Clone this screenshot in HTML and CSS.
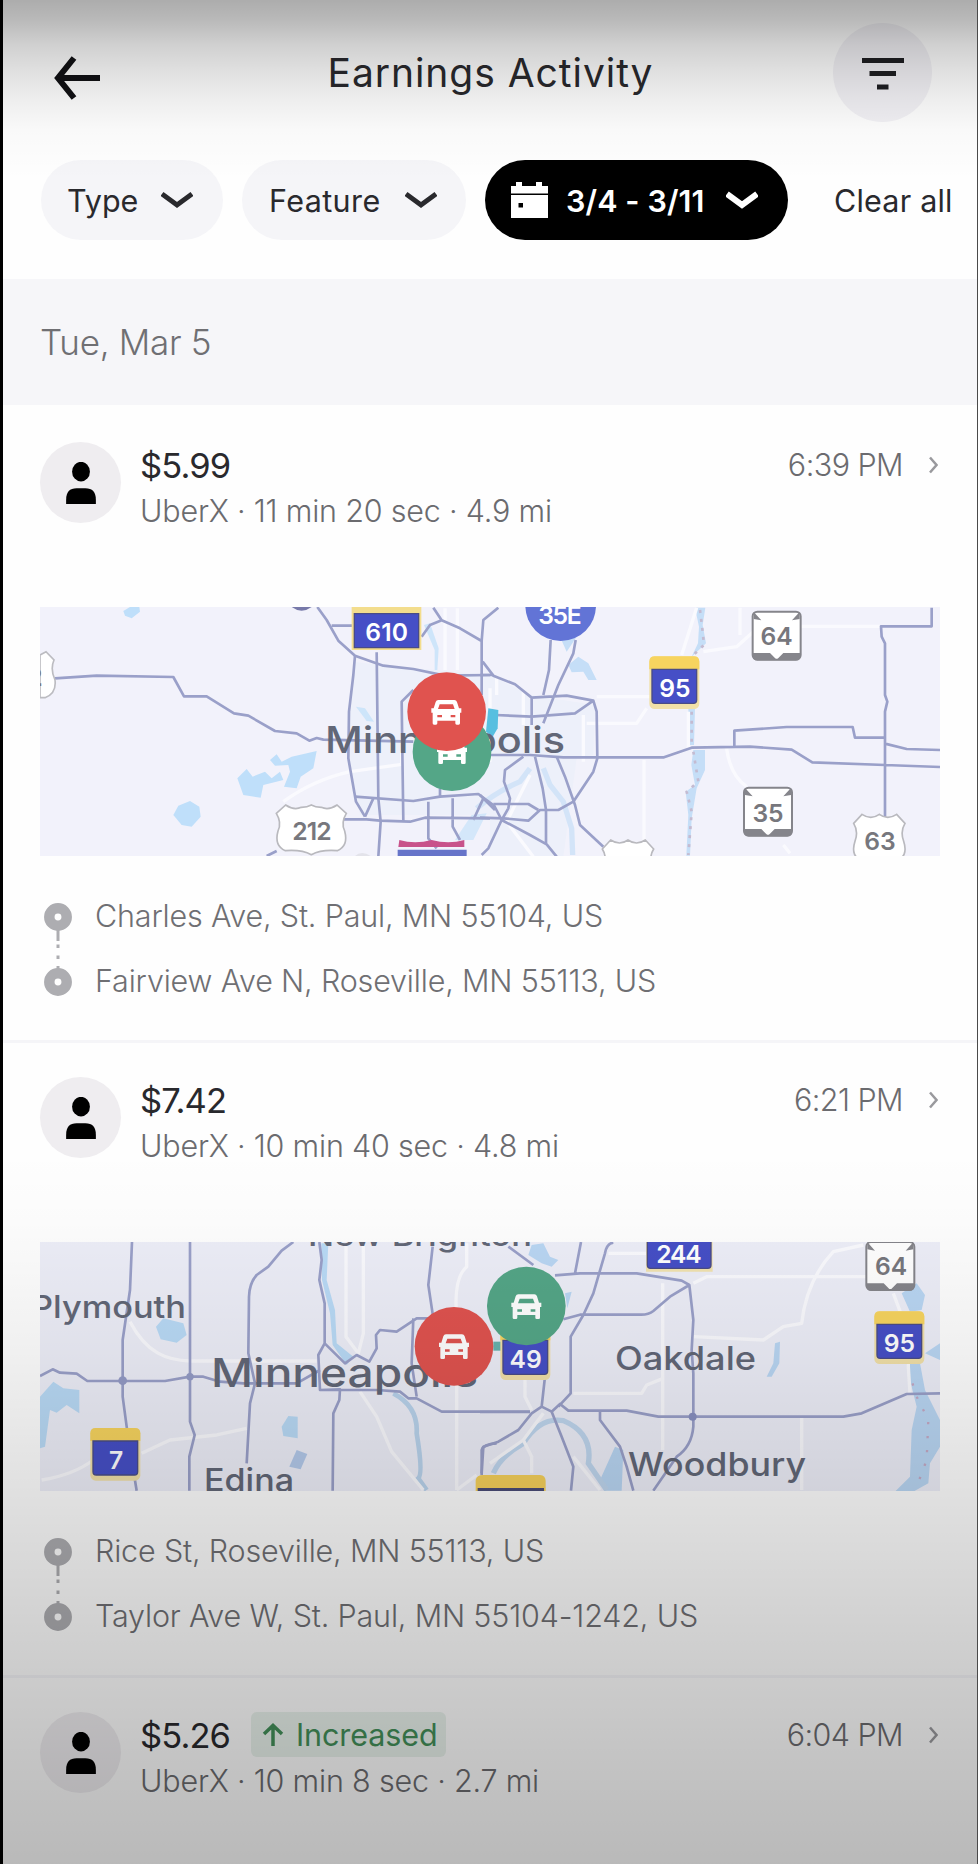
FILE: index.html
```html
<!DOCTYPE html>
<html lang="en">
<head>
<meta charset="utf-8">
<title>Earnings Activity</title>
<link rel="stylesheet" href="styles.css">
</head>
<body>
<svg class="defs" width="0" height="0" aria-hidden="true">
  <defs>
    <path id="car" fill-rule="evenodd" d="M-24-37H24Q30-37 32-31L38-12H45V1H41V33Q41 37 37 37H31Q27 37 27 33V25H-27V33Q-27 37-31 37H-37Q-41 37-41 33V1H-45V-12H-38L-32-31Q-30-37-24-37ZM-20-24L-25-10H25L20-24ZM-27 8V15H-13V8ZM13 8V15H27V8Z"/>
    <g id="county">
      <rect x="-75" y="-79" width="150" height="158" rx="16" fill="#f1e0a8"/>
      <path d="M-75-40V-63Q-75-79-59-79H59Q75-79 75-63V-40Z" fill="#f7d45f"/>
      <path d="M-67-40H67V52Q67 62 57 62H-57Q-67 62-67 52Z" fill="#464fc6" stroke="#4a4c86" stroke-width="4"/>
    </g>
    <g id="state">
      <rect x="-72" y="-72" width="144" height="144" rx="14" fill="#fff" stroke="#85858b" stroke-width="6"/>
      <path d="M-69-50V-68H-66L-46-46ZM69-50V-68H66L46-46ZM-72 52H-20L0 72L20 52H72V60Q72 74 58 74H-58Q-72 74-72 60Z" fill="#85858b"/>
    </g>
    <path id="shield" d="M-52-73Q-25-55 0-73Q25-55 52-73L77-46Q62-22 73 8Q88 54 50 66Q20 66 0 78Q-20 66-50 66Q-88 54-73 8Q-62-22-77-46Z" fill="#fff" stroke="#b9b9be" stroke-width="5"/>
    <path id="shield-wide" d="M-77-73Q-52-56-30-66Q-12-66 0-73Q12-66 30-66Q52-56 77-73L105-48Q88-20 100 5Q112 50 78 64Q30 60 0 76Q-30 60-78 64Q-112 50-100 5Q-88-20-105-48Z" fill="#fff" stroke="#b9b9be" stroke-width="5"/>
    <g id="person"><ellipse cx="13" cy="11" rx="10.2" ry="11.2" transform="translate(4 0)"/><path d="M0 48V43Q0 30 12 30H22Q34 30 34 43V48Z"/></g>
  </defs>
</svg>

<main class="screen">
  <header class="header">
    <svg class="back" viewBox="0 0 48 44"><path d="M21 2L5 22L21 42M4 22H47"/></svg>
    <h1 class="title">Earnings Activity</h1>
    <span class="filter"><svg viewBox="0 0 44 34"><path d="M1 3.5H43M8.500 16.500H35M16 30H27.500"/></svg></span>
  </header>

  <nav class="chips">
    <span class="chip chip-type"><span class="chip-label t-type">Type</span><svg class="chev" viewBox="0 0 32 18"><path d="M1 3L16 14L31 3"/></svg></span>
    <span class="chip chip-feature"><span class="chip-label t-feature">Feature</span><svg class="chev" viewBox="0 0 32 18"><path d="M1 3L16 14L31 3"/></svg></span>
    <span class="chip chip-date">
      <svg class="cal" viewBox="0 0 37 37"><path fill-rule="evenodd" d="M0 13H37V36H0ZM7.500 21V25.500H12V21Z"/><path d="M0 4H5V0H11V4H25V0H31V4H37V11.500H0Z"/></svg>
      <span class="t-date">3/4 - 3/11</span>
      <svg class="chev" viewBox="0 0 32 18"><path d="M1 3L16 14L31 3"/></svg>
    </span>
    <span class="clear">Clear all</span>
  </nav>

  <h2 class="day">Tue, Mar 5</h2>

  <article class="ride">
    <div class="ride-head">
      <span class="avatar"><svg viewBox="0 0 34 48"><use href="#person"/></svg></span>
      <div class="ride-text">
        <div class="fare-row"><span class="fare">$5.99</span></div>
        <div class="detail">UberX · 11 min 20 sec · 4.9 mi</div>
      </div>
      <span class="time">6:39 PM</span>
      <svg class="go" viewBox="0 0 9 18"><path d="M1 1.500L7.500 9L1 16.500"/></svg>
    </div>
    <svg class="map" viewBox="0 0 900 249">
      <rect width="900" height="249" fill="#f2f2fb"/>
      <g transform="translate(-10 -12) scale(.33333)">
        <path d="M955 480L990 660H1380V785H1600L1640 490L1690 480L1695 330L1500 300L1380 240L1050 210L970 200Z" fill="#edf0fa"/>
        <g fill="#bfdffa">
          <path d="M280 48L300 36H328L330 50L305 70L285 62Z"/>
          <path d="M430 660L445 632L480 618L508 635L512 665L485 695L455 690Z"/>
          <path d="M622 550L650 522L668 545L705 530L725 550L750 530L760 555L700 570L692 608L640 600Z"/>
          <path d="M720 495L740 478L755 500L785 485L860 468L850 520L812 545L800 580L762 575L780 530L775 510L735 512Z"/>
          <path d="M978 335L1005 340L1032 380L1010 378Z" opacity=".7"/>
          <path d="M1182 90L1200 85L1226 160L1222 225H1214V165Z" opacity=".7"/>
          <path d="M1325 660L1370 655L1330 735H1275Z" opacity=".6"/>
        </g>
        <path d="M1340 640Q1400 590 1470 560L1500 520M1540 520L1560 570L1600 620L1625 700L1628 780" fill="none" stroke="#d3e4f8" stroke-width="16"/>
        <g class="road-minor">
          <path d="M760 620Q850 555 960 530L1115 508V470M1282 40V225M1245 40V225M1380 280V500M1500 540L1430 680L1510 785"/>
        </g>
        <g class="road">
          <path d="M75 250L200 242L430 246L462 304H530L612 355L655 362L735 408L800 415L838 437L860 429L880 434L1150 440"/>
          <path d="M862 36L890 75L925 137L975 182L1060 212L1150 222L1245 242L1380 240"/>
          <path d="M905 92H970M1175 125L1200 90L1235 76L1210 38M1235 76L1290 100L1355 138L1360 75L1405 38M1355 138V300"/>
          <path d="M975 182L970 240L957 350L955 490L978 620L1005 665M1040 172L1045 610L1052 680L1045 785M1120 680L1115 320L1150 285"/>
          <path d="M975 605L1150 618L1230 605L1345 597L1390 630M940 673H1010L1050 677L1140 680L1185 668L1380 670M1005 665L1030 610M1195 620V730L1220 760M1268 610V695L1290 735M1230 605V580M1360 610L1330 675M710 783L740 768"/>
        </g>
      </g>
      <g transform="translate(440 -12) scale(.33333)">
        <g fill="#c5def7">
          <path d="M265 210L295 185L325 205L350 255H325L310 230L275 232Z"/><path d="M240 125H290L260 170Z"/>
          <path d="M645 38H676L668 90L678 145L635 185L654 145L657 95ZM625 340H645L642 450H630ZM640 465H675V525L650 580L635 670L630 782H619L625 660L617 590L645 570L634 510Z"/>
        </g>
        <path d="M660 45L668 110L672 150L640 180M635 350V445M640 470L655 560L620 590L635 650L625 780" fill="none" stroke="#c4bbd1" stroke-width="8" stroke-dasharray="9 18"/>
        <path class="road-minor" d="M650 38L605 180M780 38V120M670 170L770 155L820 110M960 94H1200M350 305H510M310 500V360M320 385H470L500 340M492 495V760M740 460Q750 540 800 575M625 350V460M910 750L930 775M50 250V300M130 290V390"/>
        <g class="road">
          <path d="M212 135L207 225L190 300M287 135L280 175L235 270L190 385M8 200L40 242L105 268L155 308L260 302L340 317L350 350L352 490L340 530L280 620L235 645H180L145 677L70 670L0 668M340 317L285 355L155 365L45 360M155 308V390"/>
          <path d="M0 240H40M10 480H150L250 487H552L635 458L810 455L935 464L997 502L1215 510L1380 516M763 458V407L920 396H1118L1125 428H1215M1215 446L1280 462L1380 465M1355 38V94H1203L1205 125L1215 145V300L1222 320L1215 350V665"/>
          <path d="M130 485L75 525L72 560L90 610L85 640L65 675L25 760L5 780M165 485L188 580L198 645V745M230 485L255 545L285 630L300 690L370 755M40 627H145L175 645M40 627L65 675L150 720L200 748L230 785M0 600L45 645"/>
        </g>
        <path d="M25 340L55 345L53 400L38 425L18 410Z" fill="#57bfe0"/>
      </g>
      <text class="city" x="285" y="145.500" font-size="37" textLength="240" lengthAdjust="spacingAndGlyphs">Minneapolis</text>
      <g transform="translate(-10 -12) scale(.33333)">
        <path d="M965 20H1174V165H965Z" fill="#f3dd8d"/><path d="M973 56H1166V158H973Z" fill="#464fc6" stroke="#4a4c86" stroke-width="4"/>
        <text class="sign" x="1070" y="137" textLength="128">610</text>
        <use href="#shield-wide" x="844" y="703"/><text class="sign dark" x="846" y="736" textLength="118">212</text>
        <path d="M30 180L48 170L72 195Q60 222 75 255Q80 295 45 308H30Z" fill="#fff" stroke="#bcbcc1" stroke-width="5"/>
        <text class="sign dark" x="15" y="273">2</text>
        <path d="M785 36H845Q815 58 785 36Z" fill="#7779a9"/>
        <path d="M975 783Q995 765 1022 783Z" fill="#e3e3ea"/>
        <path d="M1108 735Q1155 748 1205 735Q1255 748 1303 735V756H1105Z" fill="#c8528a"/><path d="M1103 764H1310V786H1103Z" fill="#6674c9"/>
        <circle cx="1592" cy="32" r="106" fill="#6274d6"/><text class="sign" x="1590" y="87" textLength="130">35E</text>
        <use href="#county" x="1933" y="263"/><text class="sign" x="1935" y="307">95</text>
        <use href="#state" x="2240" y="122"/><text class="sign dark" x="2240" y="151">64</text>
        <use href="#state" x="2214" y="650"/><text class="sign dark" x="2214" y="681">35</text>
        <use href="#shield" x="2548" y="731"/><text class="sign dark" x="2550" y="766">63</text>
        <use href="#shield" x="1794" y="808"/>
        <circle cx="1266" cy="470" r="118" fill="#54a687"/><use href="#car" x="1266" y="470" fill="#fff"/>
        <circle cx="1250" cy="350" r="118" fill="#e0534f"/><use href="#car" x="1249" y="352" fill="#fff"/>
      </g>
    </svg>
    <div class="route">
      <svg class="route-line" viewBox="0 0 28 129"><path d="M14 45V57M14 60.500V64M14 71.500V75M14 82V88"/><circle cx="14" cy="33" r="8.700"/><circle cx="14" cy="98" r="8.700"/></svg>
      <div class="stops"><div>Charles Ave, St. Paul, MN 55104, US</div><div>Fairview Ave N, Roseville, MN 55113, US</div></div>
    </div>
  </article>

  <article class="ride">
    <div class="ride-head">
      <span class="avatar"><svg viewBox="0 0 34 48"><use href="#person"/></svg></span>
      <div class="ride-text">
        <div class="fare-row"><span class="fare">$7.42</span></div>
        <div class="detail">UberX · 10 min 40 sec · 4.8 mi</div>
      </div>
      <span class="time">6:21 PM</span>
      <svg class="go" viewBox="0 0 9 18"><path d="M1 1.500L7.500 9L1 16.500"/></svg>
    </div>
    <svg class="map" viewBox="0 0 900 249">
      <rect width="900" height="249" fill="#edeef8"/>
      <g transform="translate(-10 -12) scale(.33333)">
        <g fill="#b9daf6">
          <path d="M30 500L70 455L100 475L148 480V550L110 525L80 548L60 540L45 650L30 655Z"/>
          <path d="M378 290L400 265L460 280L470 315L440 338L392 328Z"/>
          <path d="M755 590L775 558L803 560V625L760 618Z"/><path d="M778 710L800 660L832 672L812 718Z" fill="#b3c9ea"/>
          <path d="M874 40H895L890 150L915 240L920 340L970 380L950 405L908 345L900 250L876 150Z"/>
        </g>
        <path d="M1090 490Q1165 530 1160 610Q1180 730 1165 745L1190 780" fill="none" stroke="#b9d3ec" stroke-width="14"/>
        <path class="road-minor" d="M300 275C350 370 410 390 480 393H860M948 40V320L985 370L1000 310V40M1310 40V110Q1270 145 1280 260V780M35 750Q130 735 190 690M335 670L420 630L560 615L650 595M990 485L1040 560L1085 665L1180 780M1280 780L1340 735"/>
        <g class="road">
          <path d="M306 36L300 180L278 330V500L290 590L305 690L320 782M480 36V575L494 615L478 680V782"/>
          <path d="M30 438L68 418L90 428L140 431L172 453H405L480 440H520L570 455L640 460L800 460L870 420"/>
          <path d="M790 36L755 62L715 110L680 135Q658 160 657 200L655 370L675 460L660 520L650 700"/>
          <path d="M868 36L875 90L868 150L884 220V340L865 375L870 480L930 478L928 510L910 550L908 782M884 340L945 400L980 375L1018 395L1040 355L1038 315L1050 300L1100 305L1160 265H1210L1195 165L1208 50M1150 265L1145 400L1160 500M870 480L1040 480L1110 485L1135 505H1160L1235 545H1500M1355 735V660Q1360 642 1400 640"/>
        </g>
        <circle cx="278" cy="452" r="13" fill="#949bc6"/><circle cx="480" cy="440" r="11" fill="#949bc6"/>
      </g>
      <g transform="translate(440 -12) scale(.33333)">
        <g fill="#b9d6f3">
          <path d="M155 45L190 40L210 80L235 90L215 110L185 100L145 75Z"/>
          <path d="M1265 190L1310 160L1335 195L1325 240L1290 245ZM1280 400H1320L1335 480L1380 570V650L1350 700L1345 760L1300 785H1245L1290 740L1295 600L1310 530L1290 450Z"/>
          <path d="M885 340L900 335L898 400L875 440H860L880 400Z"/><path d="M360 750L405 650L430 660L425 782H375Z"/><path d="M1335 370L1380 340V390Z"/>
          <path d="M70 120L150 100M255 190L275 185L262 235Z"/>
        </g>
        <path d="M40 730Q60 680 130 640Q180 560 250 572Q340 610 325 700L380 780" fill="none" stroke="#bfd6ee" stroke-width="16"/>
        <path d="M1285 420L1310 500L1345 570L1340 690L1310 770" fill="none" stroke="#c4a9c4" stroke-width="7" stroke-dasharray="7 35"/>
        <path class="road-minor" d="M385 70H500M548 160V660M640 160L680 140H1160M640 320L850 330L910 290L965 280Q980 150 1060 65L1150 45M280 490H485L500 465L550 445M135 450V500L155 540M965 560V780M1240 190L1285 310V410L1290 490M30 700L130 630L155 680V730M280 680L360 780M190 550L130 630"/>
        <g class="road">
          <path d="M85 50L160 105M303 36L285 130M225 136L300 130H470L605 152L628 165L640 270L635 360L640 430V590Q635 650 590 680L520 782M628 165L570 200L520 243Q505 255 480 254H300L250 268M400 38Q380 40 375 70L340 190L310 255L272 320V490L235 530"/>
          <path d="M195 440L185 530L155 550L115 600L55 635L10 650L5 730M185 530L215 545L240 522L265 542H440L535 560H1090L1145 550L1280 492L1380 490M0 546H150M215 545L245 620L280 710L273 782M360 540V570L420 650L440 710L460 782"/>
        </g>
        <circle cx="638" cy="560" r="12" fill="#8990c0"/><path d="M40 335H68V362H40Z" fill="#66b2ad"/>
      </g>
      <g class="city">
        <text x="-9" y="76" font-size="31" textLength="155" lengthAdjust="spacingAndGlyphs">Plymouth</text>
        <text x="171" y="145" font-size="40" textLength="267" lengthAdjust="spacingAndGlyphs">Minneapolis</text>
        <text x="164" y="248.500" font-size="31.500" textLength="90" lengthAdjust="spacingAndGlyphs">Edina</text>
        <text x="268" y="3.500" font-size="30" textLength="224" lengthAdjust="spacingAndGlyphs">New Brighton</text>
        <text x="575" y="128" font-size="32" textLength="141" lengthAdjust="spacingAndGlyphs">Oakdale</text>
        <text x="588" y="233.500" font-size="32" textLength="178" lengthAdjust="spacingAndGlyphs">Woodbury</text>
      </g>
      <g transform="translate(-10 -12) scale(.33333)">
        <use href="#county" x="256" y="673"/><text class="sign" x="258" y="717">7</text>
        <path d="M1337 785V750Q1340 735 1360 735H1530Q1548 737 1547 755V785Z" fill="#f5d05a"/><path d="M1343 774H1542V790H1343Z" fill="#4a4c76"/>
        <path d="M1848 20H2048V125H1848Z" fill="#f1e2b0"/><path d="M1852 20H2043V105Q2043 115 2033 115H1862Q1852 115 1852 105Z" fill="#464fc6" stroke="#4a4c86" stroke-width="4"/>
        <text class="sign" x="1947" y="98" textLength="136">244</text>
        <use href="#state" x="2581" y="108"/><text class="sign dark" x="2583" y="136">64</text>
        <use href="#county" x="2608" y="323"/><text class="sign" x="2608" y="366">95</text>
        <use href="#county" x="1486" y="371"/><text class="sign" x="1487" y="415">49</text>
        <circle cx="1489" cy="228" r="118" fill="#54a687"/><use href="#car" x="1489" y="230" fill="#fff"/>
        <circle cx="1272" cy="349" r="118" fill="#e0534f"/><use href="#car" x="1272" y="350" fill="#fff"/>
      </g>
    </svg>
    <div class="route">
      <svg class="route-line" viewBox="0 0 28 129"><path d="M14 45V57M14 60.500V64M14 71.500V75M14 82V88"/><circle cx="14" cy="33" r="8.700"/><circle cx="14" cy="98" r="8.700"/></svg>
      <div class="stops"><div>Rice St, Roseville, MN 55113, US</div><div>Taylor Ave W, St. Paul, MN 55104-1242, US</div></div>
    </div>
  </article>

  <article class="ride last">
    <div class="ride-head">
      <span class="avatar"><svg viewBox="0 0 34 48"><use href="#person"/></svg></span>
      <div class="ride-text">
        <div class="fare-row"><span class="fare">$5.26</span><span class="badge"><svg viewBox="0 0 24 24"><path d="M12 23V3M3 11L12 2.500L21 11"/></svg>Increased</span></div>
        <div class="detail">UberX · 10 min 8 sec · 2.7 mi</div>
      </div>
      <span class="time">6:04 PM</span>
      <svg class="go" viewBox="0 0 9 18"><path d="M1 1.500L7.500 9L1 16.500"/></svg>
    </div>
  </article>
</main>
</body>
</html>
```
FILE: styles.css
```css
* { box-sizing: border-box; }

body {
  margin: 0;
  font-family: Inter, "Liberation Sans", sans-serif;
  color: #29292d;
  white-space: nowrap;
}

svg { display: block; flex: none; }
.defs { position: absolute; }

.screen {
  position: relative;
  width: 978px;
  height: 1864px;
  overflow: hidden;
  background: #fefefe;
  border-left: 3px solid #000;
  border-right: 1px solid #4a4a4a;
}

/* Dark fades at the top and bottom of the screen */
.screen::after {
  content: "";
  position: absolute;
  inset: 0;
  pointer-events: none;
  background:
    linear-gradient(rgba(0,0,0,.32) 0, rgba(0,0,0,.27) 20px, rgba(0,0,0,.18) 45px, rgba(0,0,0,.12) 70px, rgba(0,0,0,.065) 98px, rgba(0,0,0,.02) 130px, transparent 180px),
    linear-gradient(transparent 1150px, rgba(0,0,0,.012) 1220px, rgba(0,0,0,.055) 1350px, rgba(0,0,0,.12) 1500px, rgba(0,0,0,.2) 1680px, rgba(0,0,0,.27) 1864px);
}

.header {
  display: grid;
  grid-template-columns: 100px 1fr 100px;
  align-items: center;
  height: 145px;
  padding: 0 44px 0 50px;
}
.back { width: 48px; height: 44px; margin-top: 10px; fill: none; stroke: #111114; stroke-width: 6; }
.title {
  margin: 0 0 0 -5px;
  font-size: 39px;
  font-weight: 400;
  letter-spacing: .95px;
  text-align: center;
}
.filter {
  display: flex;
  align-items: center;
  justify-content: center;
  width: 99px;
  height: 99px;
  border-radius: 50%;
  background: #f2f1f5;
}
.filter svg { width: 44px; height: 34px; margin-top: 3px; fill: none; stroke: #1e1e22; stroke-width: 5; }

.chips { display: flex; align-items: center; height: 134px; padding: 0 0 24px 38px; }
.chip {
  display: flex;
  align-items: center;
  height: 80px;
  margin-right: 19px;
  border-radius: 40px;
  background: #f5f5f8;
  font-size: 30.5px;
}
.chip-type { width: 182px; padding-left: 26px; }
.chip-feature { width: 224px; padding-left: 27px; margin-right: 19px; }
.chip-date { width: 303px; padding-left: 26px; background: #000; color: #fff; margin-right: 46px; }
.t-type { width: 94px; }
.t-feature { width: 136px; letter-spacing: .4px; }
.t-date { width: 160px; margin-left: 18px; font-weight: 600; letter-spacing: .1px; }
.chev { width: 32px; height: 18px; fill: none; stroke: #29292d; stroke-width: 5; }
.chip-date .chev { stroke: #fff; stroke-width: 6; }
.cal { width: 37px; height: 37px; fill: #fff; }
.clear { font-size: 30.5px; letter-spacing: .2px; }

.day {
  display: flex;
  align-items: center;
  height: 126px;
  margin: 0;
  padding-left: 37px;
  background: #f6f6f9;
  color: #6f6f73;
  font-size: 35px;
  font-weight: 300;
  letter-spacing: -.3px;
}

.ride { height: 638px; padding: 37px 37px 0; border-bottom: 3px solid #f5f5f8; }
.ride + .ride { height: 635px; padding-top: 34px; }
.ride.last { border: 0; }
.ride-head { display: flex; height: 165px; }
.avatar {
  display: flex;
  flex: none;
  justify-content: center;
  width: 81px;
  height: 81px;
  padding-top: 20px;
  border-radius: 50%;
  background: #efedf0;
  fill: #000;
}
.avatar svg { width: 34px; height: 42px; }
.ride-text { flex: 1; padding: 1px 0 0 19px; }
.fare-row { display: flex; height: 45px; align-items: center; }
.fare { width: 111px; font-size: 34.5px; letter-spacing: -.9px; }
.detail, .time { color: #6b6b6f; font-size: 30.5px; font-weight: 300; letter-spacing: -.2px; }
.detail { line-height: 45px; }
.time { line-height: 45px; letter-spacing: -.55px; }
.go { width: 9px; height: 18px; margin: 14px 2px 0 26px; fill: none; stroke: #99999d; stroke-width: 2.5; }
.badge {
  display: flex;
  align-items: center;
  gap: 11px;
  height: 45px;
  margin-top: -2px;
  padding: 0 9px 0 10px;
  border-radius: 6px;
  background: #e9f2ec;
  color: #438f59;
  font-size: 30.5px;
  letter-spacing: -.1px;
}
.badge svg { width: 24px; height: 24px; fill: none; stroke: #438f59; stroke-width: 3.5; }

.map { width: 900px; height: 249px; }
.road { fill: none; stroke: #9aa0c9; stroke-width: 8; stroke-linejoin: round; }
.road-minor { fill: none; stroke: #fafafe; stroke-width: 10; stroke-linejoin: round; }
.city { fill: #626777; font-weight: 500; }
.sign { fill: #fff; font-size: 74px; font-weight: 600; text-anchor: middle; }
.sign.dark { fill: #77777d; }

.route { display: flex; margin-top: 28px; padding-left: 4px; }
.route-line { width: 28px; height: 129px; margin-right: 23px; fill: none; stroke: #adadb1; stroke-width: 10.5; }
.route-line path { stroke-width: 3; }
.stops { color: #6f6f73; font-size: 30.5px; font-weight: 300; line-height: 64.5px; letter-spacing: -.17px; }
```
